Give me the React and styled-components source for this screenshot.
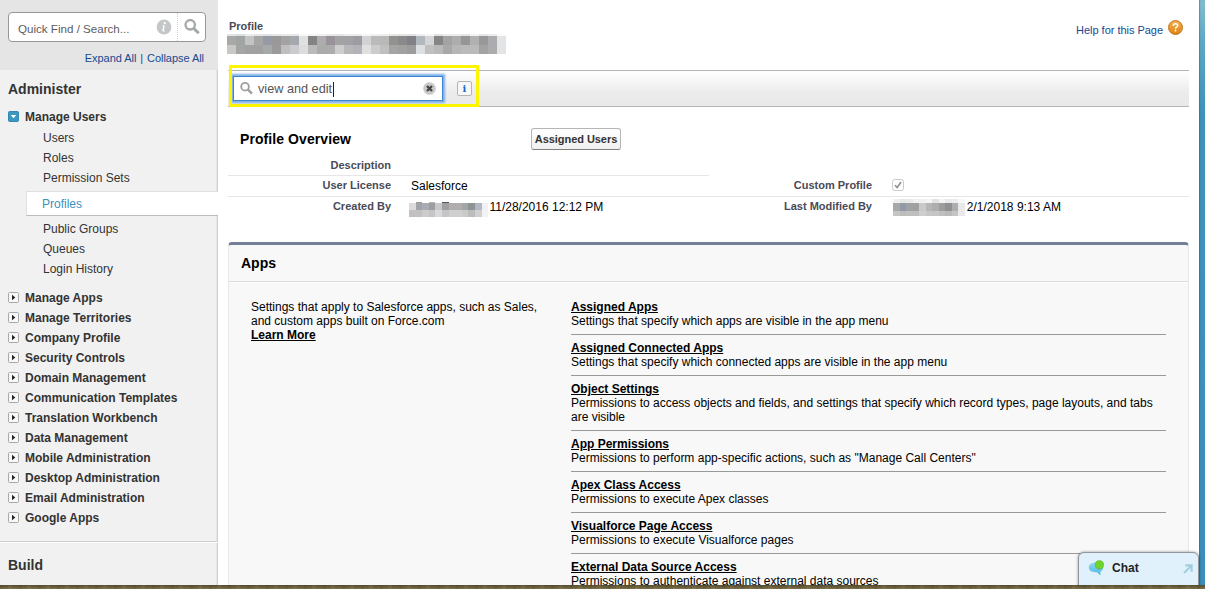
import React from "react";
import styled, { createGlobalStyle } from "styled-components";

const Global = createGlobalStyle`
  * { box-sizing: border-box; }
  html, body { margin: 0; padding: 0; overflow: hidden; }
  body { font-family: "Liberation Sans", Arial, sans-serif; font-size: 12px; color: #000; background: #fff; }
`;

const Desktop = styled.div`
  width: 1205px; height: 589px; overflow: hidden;
  display: flex; flex-direction: column;
`;
const Window = styled.div`
  position: relative; display: flex; height: 585px; flex: none; overflow: hidden;
`;
const Ground = styled.div`
  height: 4px; flex: none;
  background:
    repeating-linear-gradient(90deg, rgba(40,35,10,.1) 0 3px, transparent 3px 8px, rgba(190,175,110,.1) 8px 12px, transparent 12px 19px),
    linear-gradient(#544b30, #7c7048);
`;
const Sky = styled.div`
  width: 6px; flex: none;
  background: linear-gradient(#83bccd 0, #5ea9c4 40px, #3d93ba 110px, #3a8fba 100%);
  box-shadow: inset 1px 0 1px rgba(20,80,110,.35);
`;

const Sidebar = styled.nav`
  width: 218px; flex: none; background: #f1f1f1;
  box-shadow: inset -1px 0 0 #cfcfcf, inset -2px 0 0 #e6e6e6;
`;
const SideTop = styled.div`
  height: 70px; background: #e5e5e5; padding: 12px 12px 0 8px;
`;
const FindBox = styled.div`
  height: 30px; display: flex; align-items: center; background: #fff;
  border: 1px solid #979797; border-radius: 4px; padding-left: 9px;
`;
const FindText = styled.span`
  flex: 1; font-size: 11.6px; color: #5c5c5c; padding-top: 3px; white-space: nowrap;
`;
const FindButton = styled.span`
  width: 28px; height: 28px; margin-left: 5px; border-left: 1px dotted #d4d4d4;
  display: flex; align-items: center; justify-content: center;
`;
const ExpandLinks = styled.div`
  display: flex; justify-content: flex-end; gap: 4px; margin-top: 9px; padding-right: 2px;
  line-height: 14px; font-size: 11px; letter-spacing: -.05px; color: #15498f;
`;
const SectionTitle = styled.h2`
  margin: 0; height: ${(p) => p.$h || 37}px; display: flex; align-items: center;
  padding-left: 8px; padding-top: 1px; font-size: 14px; color: #333;
`;
const Group = styled.div`
  height: 20px; display: flex; align-items: center; gap: 6px; padding-left: 7px;
  font-weight: bold; font-size: 12px; color: #333; white-space: nowrap;
  svg { flex: none; margin: -1px 0 0 1px; }
`;
const Children = styled.div`
  padding: 1px 0 9px 26px;
`;
const Child = styled.div`
  height: 20px; line-height: 20px; padding-left: 17px; color: #333;
`;
const ActiveChild = styled.div`
  height: 25px; line-height: 24px; margin: 3px 0; padding-left: 15px; color: #3a91bd;
  background: #fff; border: 1px solid #e0e0e0; border-right: 0; border-bottom-color: #bcbcbc;
`;
const Divider = styled.div`
  margin-top: 13px; height: 2px; background: #fff; border-top: 1px solid #cfcfcf;
`;

const Main = styled.main`
  width: 981px; flex: none; padding: 0 10px; background: #fff;
`;
const PageHead = styled.header`
  height: 70px; display: flex; justify-content: space-between;
`;
const HeadTitle = styled.div`
  padding: 20px 0 0 1px; font-size: 11px; font-weight: bold; line-height: 13px; color: #4a4a56;
`;
const Mosaic = styled.div`
  display: grid; grid-template-columns: repeat(${(p) => p.$cols}, ${(p) => p.$cell}px);
  grid-template-rows: ${(p) => p.$rows}; margin: ${(p) => p.$margin || 0};
`;
const Cell = styled.i`
  background: ${(p) => p.$c};
`;
const Help = styled.div`
  display: flex; gap: 5px; height: 15px; margin: 20px 6px 0 0; color: #15498f;
  span { line-height: 20px; font-size: 11px; letter-spacing: -.03px; }
`;
const Toolbar = styled.div`
  position: relative; height: 37px; border: 1px solid #b4b4b4; border-width: 1px 0;
  background: linear-gradient(#fff 0, #ebebeb 22px, #e9e9e9 100%);
  display: flex; align-items: center; padding-left: 5px;
`;
const Highlight = styled.div`
  position: absolute; left: 1px; top: -6px; width: 250px; height: 42px; border: 3px solid #fff500;
`;
const SearchField = styled.div`
  width: 210px; height: 25px; background: #fff; border: 1px solid #3f85d2;
  box-shadow: 0 0 2px 2px #79aee8;
  display: flex; align-items: center; padding: 0 6px 0 6px; color: #555;
  svg { flex: none; }
`;
const SearchValue = styled.span`
  margin: 1px auto 0 5px; line-height: 15px; padding-right: 1px; border-right: 1px solid #222;
  font-size: 12.7px;
`;
const InfoButton = styled.span`
  margin-left: 14px; width: 15px; height: 15px; border: 1px solid #b5b5b5; border-radius: 2px;
  background: #f7f7f7; color: #1468c7; font: bold 10px/13px "DejaVu Serif", serif; text-align: center;
`;

const OverviewHead = styled.div`
  height: 48px; padding: 21px 0 0 12px; display: flex;
`;
const OverviewTitle = styled.h3`
  margin: 0; width: 291px; font-size: 14px; line-height: 22px; letter-spacing: .08px;
`;
const Button = styled.button`
  width: 90px; height: 22px; padding: 0; font: bold 11px "Liberation Sans", Arial, sans-serif; color: #333;
  border: 1px solid #b5b5b5; border-bottom-color: #7f7f7f; border-radius: 3px;
  background: linear-gradient(#fff, #f0f0f0); white-space: nowrap; letter-spacing: -.05px;
`;
const Details = styled.div`
  display: grid; grid-template-columns: 481px 480px; grid-template-rows: 21px 21px 45px;
`;
const Field = styled.div`
  display: flex; height: 21px; border-bottom: 1px solid ${(p) => (p.$line ? "#e6e6e6" : "transparent")};
`;
const Label = styled.span`
  width: 163px; flex: none; text-align: right; line-height: ${(p) => (p.$low ? 21 : 19)}px;
  font-size: 11px; font-weight: bold; color: #4a4a56;
`;
const Value = styled.span`
  margin-left: 20px; display: flex; line-height: 21px; white-space: nowrap;
`;

const Panel = styled.section`
  height: 400px; background: #f8f8f8; border: 1px solid #e7e7e7; border-top: 3px solid #747e96;
  border-radius: 4px 4px 0 0;
`;
const PanelTitle = styled.h3`
  margin: 0; height: 37px; line-height: 37px; padding-left: 12px; font-size: 14px; border-bottom: 1px solid #dadada;
`;
const PanelBody = styled.div`
  display: flex; padding: 17px 22px 0; line-height: 14px; border-top: 1px solid #fff;
`;
const Intro = styled.div`
  width: 320px; white-space: nowrap;
`;
const Link = styled.a`
  display: block; width: max-content; font-weight: bold; text-decoration: underline; text-underline-offset: 1px;
  height: 14px;
`;
const Settings = styled.div`
  width: 595px; margin-top: -6px;
`;
const Setting = styled.div`
  padding: 6px 0; border-bottom: 1px solid #999;
`;

const ChatTab = styled.div`
  position: absolute; left: 1078px; top: 552px; width: 121px; height: 36px;
  border: 1px solid #8f979c; border-radius: 6px 6px 0 0; background: #e1f1fc; box-shadow: 0 0 3px rgba(0,0,0,.4);
  display: flex; align-items: flex-start; padding: 7px 5px 0 9px;
  strong { font-size: 12px; line-height: 16px; margin: 0 auto 0 7px; color: #222; }
`;

const Magnifier = ({ size, color }) => (
  <svg width={size} height={size} viewBox="0 0 16 16" fill="none" stroke={color}>
    <circle cx="6.2" cy="5.8" r="4.7" strokeWidth="2.3" />
    <path d="M9.6 9.2 L14.7 14.3" strokeWidth="3" />
  </svg>
);
const InfoDot = () => (
  <svg width="16" height="16" viewBox="0 0 16 16">
    <circle cx="8" cy="8" r="7.4" fill="#c4c7c8" />
    <path d="M8.1 6.6 L7.1 11.2 Q7 12.2 8.4 11.6 M6.8 6.9 H8" stroke="#fff" strokeWidth="1.5" fill="none" />
    <circle cx="8.8" cy="4.2" r="1.15" fill="#fff" />
  </svg>
);
const Toggle = ({ open }) => (
  <svg width="11" height="11" viewBox="0 0 11 11">
    <rect x=".5" y=".5" width="10" height="10" rx="1" fill={open ? "#3c97c1" : "#f7f7f7"} stroke={open ? "#3587b0" : "#a9a9a9"} />
    <path d={open ? "M2.8 4 H8.2 L5.5 7.2 Z" : "M4 2.7 V8.3 L7.3 5.5 Z"} fill={open ? "#fff" : "#222"} />
  </svg>
);
const ClearIcon = () => (
  <svg width="13" height="13" viewBox="0 0 13 13">
    <circle cx="6.5" cy="6.5" r="6.3" fill="#c9c9c9" />
    <path d="M4 4 L9 9 M9 4 L4 9" stroke="#444" strokeWidth="2.3" />
  </svg>
);
const HelpIcon = () => (
  <svg width="15" height="15" viewBox="0 0 15 15">
    <defs>
      <linearGradient id="orange" x1="0" y1="0" x2="0" y2="1">
        <stop offset="0" stopColor="#f6b04d" /><stop offset="1" stopColor="#df820f" />
      </linearGradient>
    </defs>
    <circle cx="7.5" cy="7.5" r="7" fill="url(#orange)" stroke="#b86f1c" strokeWidth=".9" />
    <path d="M5.3 5.9 Q5.3 3.8 7.5 3.8 Q9.7 3.8 9.7 5.6 Q9.7 6.6 8.5 7.2 Q7.5 7.7 7.5 8.8" fill="none" stroke="#fff" strokeWidth="1.5" />
    <rect x="6.7" y="9.8" width="1.6" height="1.6" fill="#fff" />
  </svg>
);
const CheckSvg = styled.svg`
  margin-top: 3px;
`;
const Checkbox = () => (
  <CheckSvg width="12" height="12" viewBox="0 0 12 12">
    <rect x=".5" y=".5" width="11" height="11" rx="2" fill="#fcfcfc" stroke="#cbcbcb" />
    <path d="M3 6.2 L5.2 8.6 L9 3" fill="none" stroke="#8b8b8b" strokeWidth="1.5" />
  </CheckSvg>
);
const ChatIcon = () => (
  <svg width="17" height="16" viewBox="0 0 17 16">
    <defs>
      <linearGradient id="bubble" x1="0" y1="0" x2="0" y2="1">
        <stop offset="0" stopColor="#8fd6f0" /><stop offset="1" stopColor="#4fb8e2" />
      </linearGradient>
    </defs>
    <path d="M7.6 2.6 C3.4 2.6 .8 4.8 .8 7.6 C.8 10.4 3.8 12.3 7.6 12.3 L9.3 12.2 C9.9 13.6 11.2 14.7 13 15 C12.3 13.9 12.2 12.6 12.6 11.4 C14.2 10.6 15.2 9.2 15.2 7.5 C15.2 4.6 12 2.6 7.6 2.6 Z" fill="url(#bubble)" />
    <circle cx="11.4" cy="4.8" r="4.1" fill="#6fd42a" stroke="#53b81c" strokeWidth=".7" />
  </svg>
);
const PopOutSvg = styled.svg`
  margin-top: 4px;
`;
const PopOut = () => (
  <PopOutSvg width="10" height="10" viewBox="0 0 10 10">
    <path d="M1 9 L8 2 M2.2 1.4 H8.6 V7.8" fill="none" stroke="#9fcfdf" strokeWidth="2.1" />
  </PopOutSvg>
);

const profileName = [
  "#e4e4e4 #dcdfdf #ececec #e6e6e6 #e2e3e6 #e6e6e6 #e9e9e9 #e6e6e8 #f8f8f8 #f4f4f4 #f0f0f0 #e8e8e8 #e4e4e4 #ececec #ececee #f6f6f6 #f0f0f0 #eeeeee #e6e6e6 #e4e4e4 #e2e2e4 #eeeff1 #f6f6f6 #e2e2e2 #ececec #ececec #e6e6e6 #f2f2f2 #e6e6e6 #ededed #fafafa",
  "#a8a8a6 #9fa5a3 #c4c4c4 #a6a6a4 #969aa5 #9a9898 #a3a3a3 #a5a9ad #dfe1e0 #838381 #adadad #989399 #a3a3a3 #a2a2a6 #9d9da1 #d2d2d4 #bababa #b9b9b9 #92928f #8a8a8a #7f8187 #b1b9bf #d5d5d7 #858585 #a3a3a7 #adadab #969696 #b1b1b1 #989898 #acacb0 #e2e4e6",
  "#c8c8c6 #a5a5a3 #a1a1a1 #a1a1a1 #a5a9a9 #9b9b9b #c0bebe #cbcbcf #dadcdd #bababa #ababab #acacac #cecece #b8b8b8 #b1b3b9 #e0e0e0 #cccccc #c0c0c0 #a5a5a5 #a1a1a1 #9c9c9c #dde0e3 #c0c0c0 #b9b9b9 #a8a8a8 #b6b6b6 #bababa #bababa #a3a3a3 #acacac #e2e4e6",
];
const creator = [
  "#ffffff #9c9c9c #ffffff #b4b4b4 #ffffff #555555 #ffffff #ffffff #ffffff #ffffff #ffffff #ffffff",
  "#dedada #a2a3a8 #aaacb5 #9d9e9d #c5c9cc #a0a0a2 #b1acae #b1acae #a3a5a9 #8e9496 #b2b7c3 #f1f1f5",
  "#c3c1c0 #c3c1c0 #cccccc #c5c5c5 #d9d9dc #c5c5c5 #d0cfd0 #d0cfd0 #cacaca #bcbcbc #d0d0d2 #f3f3f3",
];
const modifier = [
  "#f0f0f0 #e7e7e7 #eaeaea #f1f1f1 #f0f0f0 #f5f5f5 #e3e3e3 #f3f3f3 #eaeaea #ededed #f8f8f8",
  "#a7a9a8 #929aa7 #9fa1a4 #9fa09f #c9cbca #b4b7b7 #adaead #9d9d9f #8e8f90 #acadaf #e9e9e9",
  "#c5c5c5 #bcbcbc #bfbfbf #bfbfc0 #cecece #c6c6c6 #c5c5c5 #bfbfbf #bababa #c5c5c5 #e9e9e9",
];
const Redacted = ({ data, cell, rows, margin }) => (
  <Mosaic $cols={data[0].split(" ").length} $cell={cell} $rows={rows} $margin={margin}>
    {data.flatMap((r, y) => r.split(" ").map((c, x) => <Cell key={`${y}-${x}`} $c={c} />))}
  </Mosaic>
);

const groups = [
  "Manage Apps", "Manage Territories", "Company Profile", "Security Controls", "Domain Management",
  "Communication Templates", "Translation Workbench", "Data Management", "Mobile Administration",
  "Desktop Administration", "Email Administration", "Google Apps",
];
const settings = [
  ["Assigned Apps", "Settings that specify which apps are visible in the app menu"],
  ["Assigned Connected Apps", "Settings that specify which connected apps are visible in the app menu"],
  ["Object Settings", "Permissions to access objects and fields, and settings that specify which record types, page layouts, and tabs are visible"],
  ["App Permissions", "Permissions to perform app-specific actions, such as \"Manage Call Centers\""],
  ["Apex Class Access", "Permissions to execute Apex classes"],
  ["Visualforce Page Access", "Permissions to execute Visualforce pages"],
  ["External Data Source Access", "Permissions to authenticate against external data sources"],
];

export default function App() {
  return (
    <Desktop>
      <Global />
      <Window>
        <Sidebar>
          <SideTop>
            <FindBox>
              <FindText>Quick Find / Search...</FindText>
              <InfoDot />
              <FindButton><Magnifier size={16} color="#a3a8aa" /></FindButton>
            </FindBox>
            <ExpandLinks><span>Expand All</span><span>|</span><span>Collapse All</span></ExpandLinks>
          </SideTop>
          <SectionTitle>Administer</SectionTitle>
          <Group><Toggle open />Manage Users</Group>
          <Children>
            <Child>Users</Child>
            <Child>Roles</Child>
            <Child>Permission Sets</Child>
            <ActiveChild>Profiles</ActiveChild>
            <Child>Public Groups</Child>
            <Child>Queues</Child>
            <Child>Login History</Child>
          </Children>
          {groups.map((g) => <Group key={g}><Toggle />{g}</Group>)}
          <Divider />
          <SectionTitle $h={42}>Build</SectionTitle>
        </Sidebar>
        <Main>
          <PageHead>
            <HeadTitle>
              Profile
              <Redacted data={profileName} cell={9} rows="2px 9px 9px" margin="1px 0 0 -2px" />
            </HeadTitle>
            <Help><span>Help for this Page</span><HelpIcon /></Help>
          </PageHead>
          <Toolbar>
            <SearchField>
              <Magnifier size={13} color="#a0a0a0" />
              <SearchValue>view and edit</SearchValue>
              <ClearIcon />
            </SearchField>
            <InfoButton>i</InfoButton>
            <Highlight />
          </Toolbar>
          <OverviewHead>
            <OverviewTitle>Profile Overview</OverviewTitle>
            <Button>Assigned Users</Button>
          </OverviewHead>
          <Details>
            <Field $line><Label $low>Description</Label></Field>
            <Field />
            <Field $line><Label>User License</Label><Value>Salesforce</Value></Field>
            <Field $line><Label>Custom Profile</Label><Value><Checkbox /></Value></Field>
            <Field>
              <Label>Created By</Label>
              <Value><Redacted data={creator} cell={6.6} rows="1px 7px 7px" margin="5px -2px 0 -2px" />&nbsp;11/28/2016 12:12 PM</Value>
            </Field>
            <Field>
              <Label>Last Modified By</Label>
              <Value><Redacted data={modifier} cell={6.5} rows="4px 8px 5px" margin="2px -1px 0 1px" />&nbsp;2/1/2018 9:13 AM</Value>
            </Field>
          </Details>
          <Panel>
            <PanelTitle>Apps</PanelTitle>
            <PanelBody>
              <Intro>
                Settings that apply to Salesforce apps, such as Sales,<br />and custom apps built on Force.com
                <Link>Learn More</Link>
              </Intro>
              <Settings>
                {settings.map(([t, d]) => <Setting key={t}><Link>{t}</Link>{d}</Setting>)}
              </Settings>
            </PanelBody>
          </Panel>
        </Main>
        <Sky />
        <ChatTab><ChatIcon /><strong>Chat</strong><PopOut /></ChatTab>
      </Window>
      <Ground />
    </Desktop>
  );
}
